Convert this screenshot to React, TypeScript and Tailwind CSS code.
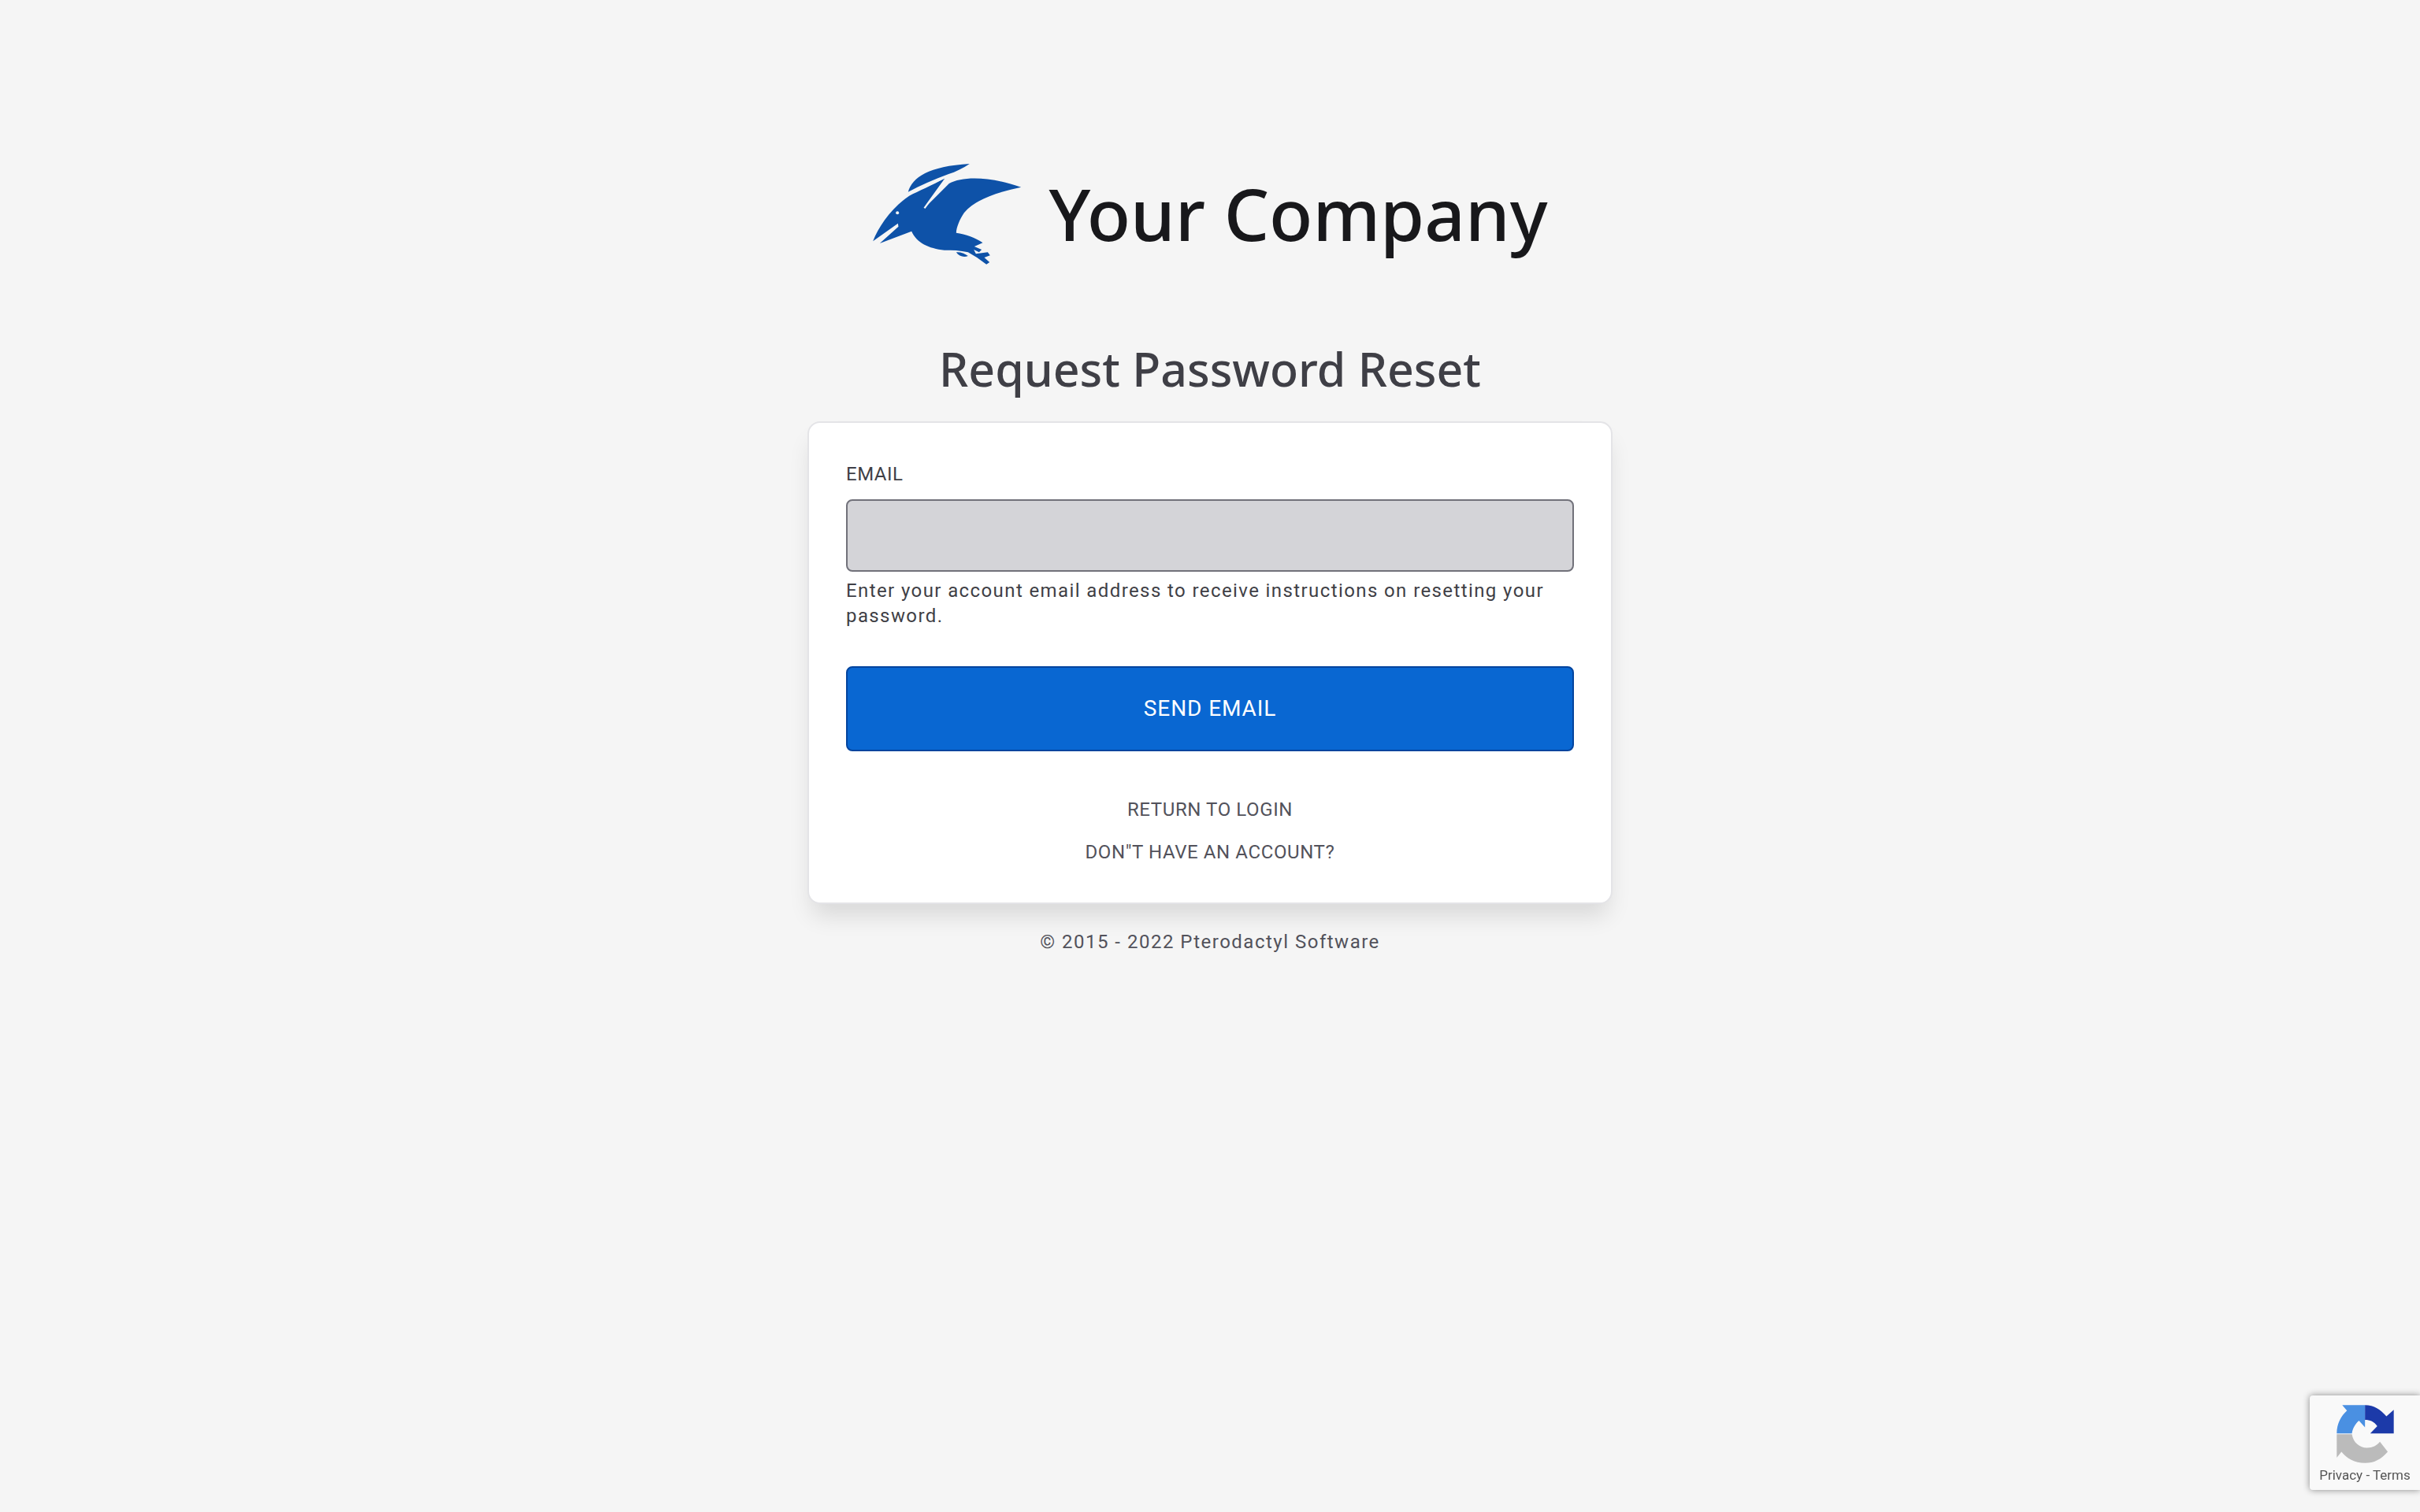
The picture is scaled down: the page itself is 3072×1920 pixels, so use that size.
const Logo = () => (
  <svg viewBox="85 80 575 390" className="w-[192px] h-[130px] shrink-0">
    {/* crest */}
    <path d="M222,190 C238,135 300,92 456,83 C432,100 402,114 376,122 C320,142 270,165 222,190 Z" fill="#0e52a8" />
    {/* head and body */}
    <path
      d="M88,378 C110,320 160,250 226,205 C262,186 310,166 365,136 L284,252 L378,158 C430,130 530,130 652,172 C570,190 480,215 435,270 C418,295 406,325 405,346 C440,350 480,365 506,384 L474,398 L502,410 L492,420 L472,410 L480,426 L525,420 L534,432 L512,440 L532,458 L520,466 L484,440 L450,420 C420,412 390,412 360,412 C300,405 255,385 235,340 L114,386 L185,322 L183,310 Z"
      fill="#0e52a8"
    />
    <path d="M405,420 C420,418 435,424 450,434 C435,440 415,436 405,420 Z" fill="#0e52a8" />
    <path d="M226,198 L372,130 L284,252" fill="none" stroke="#f5f5f5" strokeWidth="7" />
    <circle cx="181" cy="270" r="6" fill="#f5f5f5" />
  </svg>
);

const RecaptchaIcon = () => (
  <svg viewBox="190 100 232 235" className="w-[77px] h-[78px]">
    <path d="M197,215 C197,178 214,148 236,128 L218,107 L305,107 L305,192 L282,166 C268,178 258,195 255,215 Z" fill="#4a90e2" />
    <path d="M305,107 C340,107 365,125 387,150 L415,125 L415,215 L325,215 L352,187 C340,170 325,163 305,163 Z" fill="#1c3aa9" />
    <path d="M197,218 L255,218 C260,250 285,270 312,270 C335,270 350,262 362,247 L392,285 C365,315 340,328 305,328 C265,328 235,310 215,285 L197,308 Z" fill="#bbbbbb" />
  </svg>
);

export default function App() {
  return (
    <div className="relative min-h-[1920px] bg-[#f5f5f5] font-['Roboto',sans-serif] text-[#3f3f46]">
      <div className="w-[1022px] mx-auto pt-[205px] flex flex-col items-center">
        <div className="flex items-center gap-[32px] h-[133px]">
          <Logo />
          <h1 className="font-['Noto_Sans',sans-serif] font-medium text-[90.5px] leading-none text-[#18181b] whitespace-nowrap">Your Company</h1>
        </div>
        <h2 className="font-['Noto_Sans',sans-serif] font-medium text-[59px] leading-[80px] mt-[90px] text-center whitespace-nowrap">
          Request Password Reset
        </h2>
        <form className="w-full mt-[27px] h-[613px] bg-white rounded-[16px] border-2 border-[#e4e4e7] shadow-[0_20px_30px_-6px_rgba(0,0,0,0.12)] px-[47px] pt-[49px]">
          <label className="block text-[24px] leading-[32px] tracking-[0.5px]">EMAIL</label>
          <div className="mt-[16px] h-[92px] bg-[#d4d4d8] border-2 border-[#71717a] rounded-[8px]"></div>
          <p className="mt-[8px] text-[24px] leading-[32px] tracking-[1.4px]">
            Enter your account email address to receive instructions on resetting your password.
          </p>
          <button type="button" className="mt-[48px] w-full h-[108px] bg-[#0967d2] border-2 border-[#03449e] rounded-[8px] text-white text-[28px] tracking-[0.9px]">
            SEND EMAIL
          </button>
          <div className="mt-[58px] flex flex-col items-center gap-[22px] text-[24px] leading-[32px] tracking-[0.6px] text-[#52525b]">
            <a>RETURN TO LOGIN</a>
            <a>DON"T HAVE AN ACCOUNT?</a>
          </div>
        </form>
        <p className="mt-[32px] text-[24px] leading-[32px] tracking-[1.5px] text-[#52525b]">© 2015 - 2022 Pterodactyl Software</p>
      </div>
      <div className="fixed right-0 bottom-[28px] w-[140px] h-[120px] bg-[#f9f9f9] rounded-l-[4px] shadow-[0_0_8px_rgba(0,0,0,0.45)] flex flex-col items-center pt-[10px]">
        <RecaptchaIcon />
        <div className="mt-[4px] font-['Roboto',sans-serif] text-[17px] leading-[18px] text-[#555] whitespace-nowrap">Privacy - Terms</div>
      </div>
    </div>
  );
}
